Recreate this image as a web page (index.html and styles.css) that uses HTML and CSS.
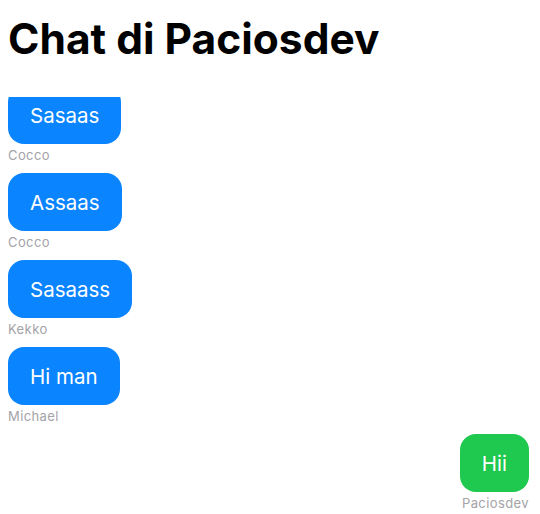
FILE: index.html
```html
<!DOCTYPE html>
<html>
<head>
<meta charset="utf-8">
<link rel="stylesheet" href="styles.css">
</head>
<body>
<h1 class="title">Chat di Paciosdev</h1>
<div class="chat">
  <div class="list">
    <div class="msg">
      <div class="bubble in">Sasaas</div>
      <div class="author">Cocco</div>
    </div>
    <div class="msg">
      <div class="bubble in">Assaas</div>
      <div class="author">Cocco</div>
    </div>
    <div class="msg">
      <div class="bubble in">Sasaass</div>
      <div class="author">Kekko</div>
    </div>
    <div class="msg">
      <div class="bubble in">Hi man</div>
      <div class="author">Michael</div>
    </div>
    <div class="msg mine">
      <div class="bubble out">Hii</div>
      <div class="author">Paciosdev</div>
    </div>
  </div>
</div>
</body>
</html>
```
FILE: styles.css
```css
html, body {
  margin: 0;
  padding: 0;
  background: #fff;
  font-family: Inter, "Noto Sans", sans-serif;
}
body {
  width: 540px;
  height: 514px;
  overflow: hidden;
  display: flex;
  flex-direction: column;
}
.title {
  margin: 0;
  padding: 13px 0 0 8px;
  height: 97px;
  flex: none;
  box-sizing: border-box;
  font-size: 42.5px;
  font-weight: 700;
  letter-spacing: 0;
  color: #000;
  line-height: 52px;
}
.chat {
  flex: 1;
  overflow: hidden;
}
.list {
  margin-top: -11px;
  padding: 0 11px 0 8px;
  display: flex;
  flex-direction: column;
  gap: 10px;
}
.msg {
  display: flex;
  flex-direction: column;
  align-items: flex-start;
}
.msg.mine {
  align-items: flex-end;
}
.bubble {
  height: 58px;
  display: flex;
  align-items: center;
  padding: 0 22px;
  border-radius: 16px;
  color: #fff;
  font-size: 20.5px;
  font-weight: 400;
}
.bubble.in {
  background: #0a84ff;
}
.bubble.out {
  background: #1fc84e;
}
.author {
  margin-top: 3px;
  font-size: 13px;
  letter-spacing: 0.4px;
  color: #a3a3a8;
  line-height: 16px;
}
```
